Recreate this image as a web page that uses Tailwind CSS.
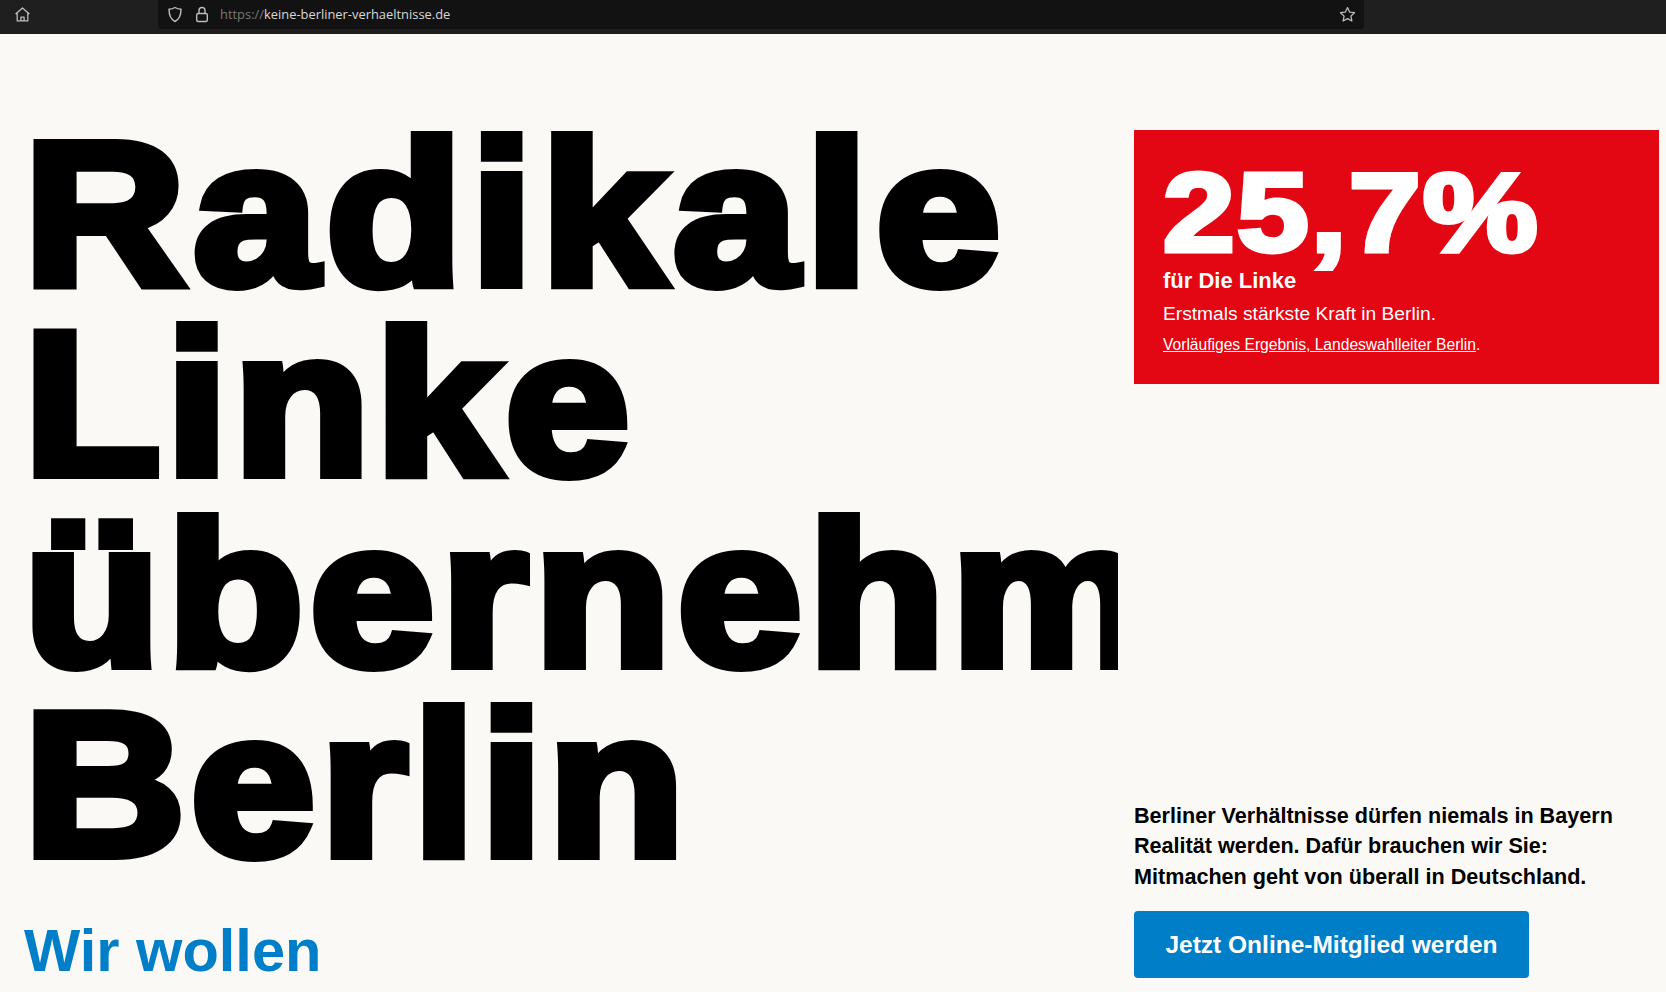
<!DOCTYPE html>
<html lang="de">
  <head>
    <meta charset="UTF-8" />
    <title>Keine Berliner Verhältnisse</title>
    <script src="https://cdn.jsdelivr.net/npm/@tailwindcss/browser@4"></script>
  </head>
  <body class="h-[992px] overflow-hidden bg-[#fbf9f5] font-['Liberation_Sans',Arial,sans-serif] text-black">
    <!-- browser toolbar -->
    <div class="flex h-[34px] items-start bg-[#1f1f1f] text-[#bdbdbd]">
      <div class="flex h-[29px] w-[158px] items-center pl-[14px]">
        <svg class="h-[17px] w-[17px]" viewBox="0 0 16 16" fill="none" stroke="currentColor" stroke-width="1.2" stroke-linejoin="round"><path d="M1.5 7.5 8 1.8l6.5 5.7M3 6.5V14h10V6.5M6.5 14v-3.5h3V14" /></svg>
      </div>
      <div class="flex h-[29px] w-[1206px] items-center rounded-b-[4px] bg-[#121212] pl-[9px] pr-[8px]">
        <svg class="h-[17px] w-[16px]" viewBox="0 0 16 17" fill="none" stroke="currentColor" stroke-width="1.4"><path d="M8 1.5c2 1.2 4 1.7 6 1.8 0 5.500-1.500 10-6 12.200C3.500 13.300 2 8.800 2 3.300c2-.1 4-.6 6-1.800z" /></svg>
        <svg class="ml-[12px] h-[17px] w-[14px]" viewBox="0 0 14 17" fill="none" stroke="currentColor" stroke-width="1.4"><rect x="1.700" y="7.500" width="10.600" height="8" rx="1.500" /><path d="M4 7.500V4.500a3 3 0 0 1 6 0v3" /></svg>
        <div class="ml-[11px] font-['Open_Sans',sans-serif] text-[12.900px] text-[#d8d8d8]"><span class="text-[#777777]">https://</span>keine-berliner-verhaeltnisse.de</div>
        <svg class="ml-auto h-[17px] w-[17px]" viewBox="0 0 16 16" fill="none" stroke="currentColor" stroke-width="1.200" stroke-linejoin="round"><path d="m8 1.500 2 4.200 4.600.6-3.400 3.200.9 4.600L8 11.900l-4.100 2.200.9-4.600L1.400 6.300 6 5.700z" /></svg>
      </div>
    </div>

    <main class="flex h-[958px] gap-[16px] overflow-hidden">
      <div class="w-[1118px] shrink-0 overflow-hidden pl-[24px] pt-[84px]">
        <!-- stroked and widened to get the black weight of the headline -->
        <h1 class="origin-left scale-x-[1.09] whitespace-nowrap text-[205px] leading-[190.300px] font-bold tracking-[5px] [-webkit-text-stroke:10px_black]">
          <div class="tracking-[7.500px]">Radikale</div>
          <div>Linke</div>
          <div class="tracking-[6px]">übernehmen</div>
          <div>Berlin</div>
        </h1>
        <div class="mt-[36px] text-[59.600px] leading-[72px] font-bold text-[#007ec8]">Wir wollen</div>
      </div>

      <div class="flex w-[525px] flex-col justify-between pt-[96px] pb-[14px]">
        <div class="h-[254px] bg-[#e30613] pl-[29px] pt-[33px] text-white">
          <div class="origin-left scale-x-[1.15] text-[112px] leading-[100px] font-bold tracking-[2px] [-webkit-text-stroke:5px_white]">25,7%</div>
          <div class="mt-[3px] text-[22px] leading-[30px] font-bold">für Die Linke</div>
          <div class="mt-[4px] text-[19.200px] leading-[28px]">Erstmals stärkste Kraft in Berlin.</div>
          <div class="mt-[4px] text-[15.600px] leading-[26px]"><span class="underline">Vorläufiges Ergebnis, Landeswahlleiter Berlin</span>.</div>
        </div>
        <div>
          <p class="text-[21.600px] leading-[30.500px] font-bold">Berliner Verhältnisse dürfen niemals in Bayern<br />Realität werden. Dafür brauchen wir Sie:<br />Mitmachen geht von überall in Deutschland.</p>
          <div class="mt-[19px] flex h-[67px] w-[395px] items-center justify-center rounded-[4px] bg-[#007ec8] pt-[1px] text-[24.500px] font-bold text-white">Jetzt Online-Mitglied werden</div>
        </div>
      </div>
    </main>
  </body>
</html>
